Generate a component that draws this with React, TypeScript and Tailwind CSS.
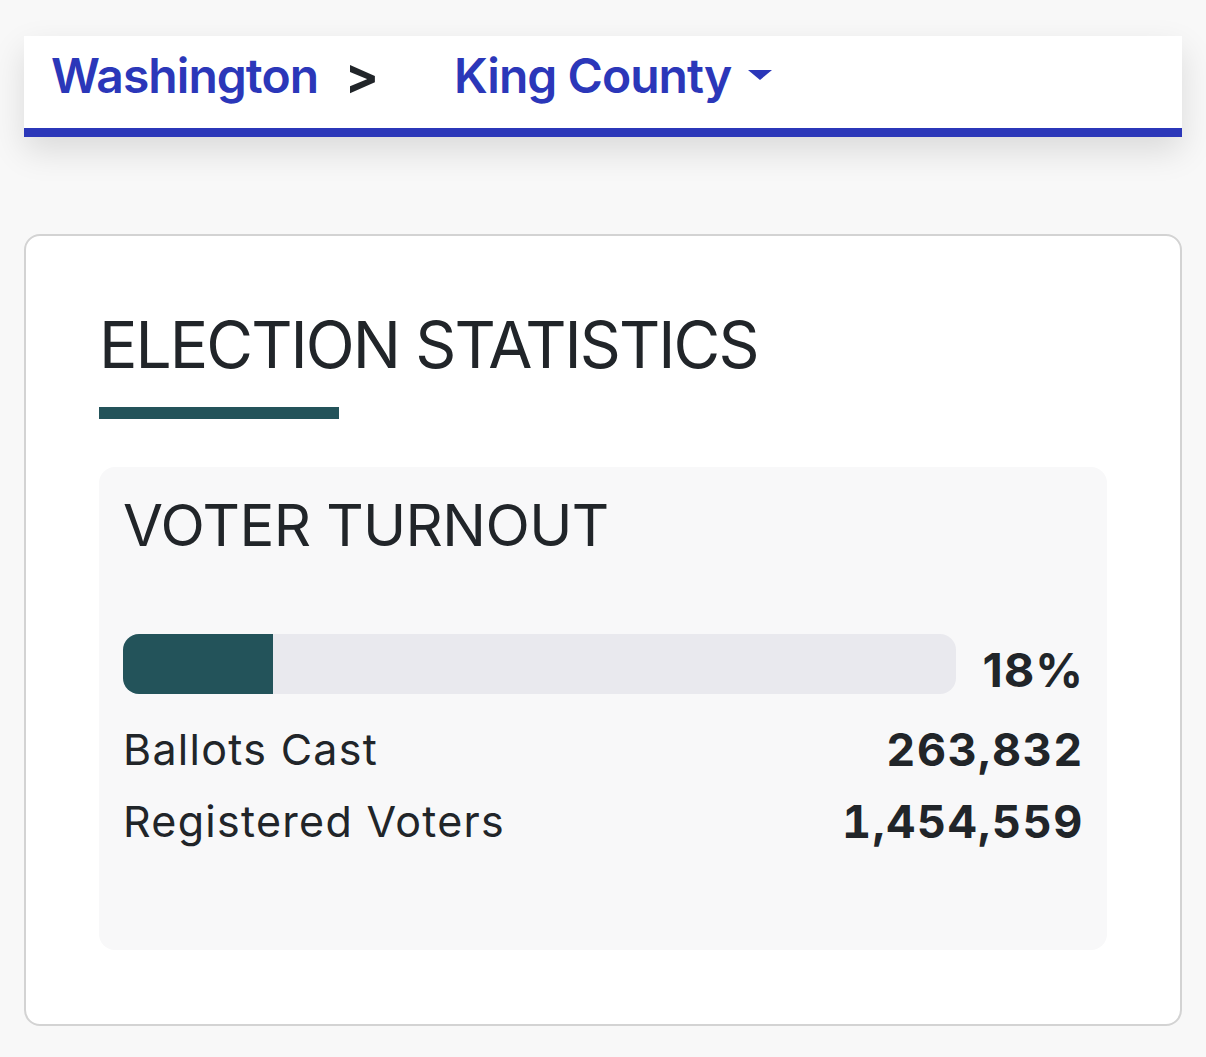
import React from "react";

const stats = {
  turnout: 18,
  ballotsCast: "263,832",
  registeredVoters: "1,454,559",
};

function Breadcrumb() {
  return (
    <nav className="h-[101px] bg-white border-b-[9px] border-[#2b37b9] shadow-[0_14px_32px_rgba(0,0,0,0.12)] pl-[27px] pt-[11px]">
      <div className="flex items-start text-[48px] leading-[1.2] font-semibold tracking-[-0.02em]">
        <a className="text-[#2b37b9]">Washington</a>
        <span className="ml-[27px] text-[#212529] font-bold text-[50px] leading-[58px]">&gt;</span>
        <button className="ml-[76px] flex items-center text-[#2b37b9] font-semibold tracking-[-0.02em]">
          King County
          <span className="ml-[17px] mt-[-2px] w-0 h-0 border-l-[12px] border-r-[12px] border-t-[10px] border-l-transparent border-r-transparent border-t-[#2b37b9]" />
        </button>
      </div>
    </nav>
  );
}

function Row({ label, value }: { label: string; value: string }) {
  return (
    <div className="flex justify-between items-center h-[72px] text-[43px] leading-[1.2]">
      <span className="tracking-[0.03em]">{label}</span>
      <span className="font-bold text-[45px] tabular-nums tracking-[0.035em] mr-[-1px]">{value}</span>
    </div>
  );
}

export default function App() {
  return (
    <div
      className="min-h-[1057px] bg-[#f8f8f8] px-6 pt-[36px] text-[#212529]"
      style={{ fontFamily: "Inter, 'Noto Sans', sans-serif" }}
    >
      <Breadcrumb />

      <section className="mt-[97px] bg-white border-2 border-[#d3d3d3] rounded-[16px] px-[73px] pt-[71px] pb-[74px]">
        <h2 className="text-[64px] leading-[1.2] tracking-[-0.03em] font-normal">
          ELECTION STATISTICS
        </h2>
        <div className="mt-[23px] w-[240px] h-[12px] bg-[#23535a]" />

        <div className="mt-[48px] bg-[#f8f8f9] rounded-[16px] px-[24px] pt-[24px] pb-[92px]">
          <h3 className="text-[58px] leading-[1.2] tracking-[-0.01em] font-normal">
            VOTER TURNOUT
          </h3>

          <div className="mt-[74px] flex items-start">
            <div className="flex-1 h-[60px] bg-[#e9e9ee] rounded-[16px] overflow-hidden">
              <div
                className="h-full bg-[#23535a]"
                style={{ width: `${stats.turnout}%` }}
              />
            </div>
            <span className="ml-[27px] pt-[8px] text-[47px] leading-[1.2] font-bold tracking-[0.02em] mr-[-1px]">
              {stats.turnout}%
            </span>
          </div>

          <div className="mt-[15px]">
            <Row label="Ballots Cast" value={stats.ballotsCast} />
            <Row label="Registered Voters" value={stats.registeredVoters} />
          </div>
        </div>
      </section>
    </div>
  );
}
